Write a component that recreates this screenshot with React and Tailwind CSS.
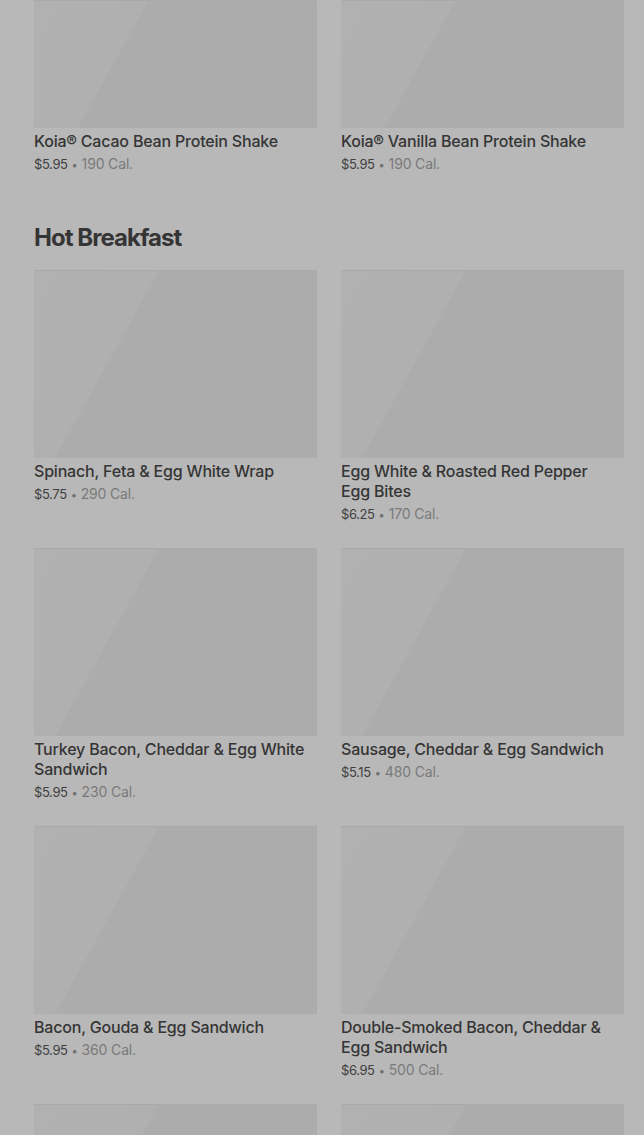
const TOP = [
  { name: 'Koia® Cacao Bean Protein Shake', price: '$5.95', cal: '190 Cal.' },
  { name: 'Koia® Vanilla Bean Protein Shake', price: '$5.95', cal: '190 Cal.' },
]

const HOT_BREAKFAST = [
  { name: 'Spinach, Feta & Egg White Wrap', price: '$5.75', cal: '290 Cal.' },
  { name: 'Egg White & Roasted Red Pepper Egg Bites', price: '$6.25', cal: '170 Cal.' },
  { name: 'Turkey Bacon, Cheddar & Egg White Sandwich', price: '$5.95', cal: '230 Cal.' },
  { name: 'Sausage, Cheddar & Egg Sandwich', price: '$5.15', cal: '480 Cal.' },
  { name: 'Bacon, Gouda & Egg Sandwich', price: '$5.95', cal: '360 Cal.' },
  { name: 'Double-Smoked Bacon, Cheddar & Egg Sandwich', price: '$6.95', cal: '500 Cal.' },
  { name: '', price: '', cal: '' },
  { name: '', price: '', cal: '' },
]

function Placeholder({ short }) {
  return (
    <div
      className={`w-full bg-[linear-gradient(119deg,#b1b1b1_0%,#b0b0b0_32%,#acacac_32.5%,#acacac_100%)] border-t border-[#a9a9a9] ${
        short ? 'h-[128px]' : 'h-[188px]'
      }`}
    />
  )
}

function ItemCard({ item, short }) {
  return (
    <div className="flex flex-col">
      <Placeholder short={short} />
      {item.name && (
        <>
          <div className="mt-[3px] pr-2 text-[16px] leading-5 font-medium text-[#353535] tracking-[-0.012em]">
            {item.name}
          </div>
          <div className="mt-[2px] h-5 leading-5 tracking-[-0.01em] overflow-hidden">
            <span className="text-[13px] text-[#3f3f3f] tracking-[-0.03em]">{item.price}</span>
            <span className="text-[#6f6f6f] text-[11px] mx-[4px]">•</span>
            <span className="text-[14px] text-[#7a7a7a]">{item.cal}</span>
          </div>
        </>
      )}
    </div>
  )
}

export default function App() {
  return (
    <div
      className="min-h-screen h-[1135px] overflow-hidden bg-[#b8b8b8] pl-[34px] pr-[20px]"
      style={{ fontFamily: 'Inter, "Noto Sans", sans-serif' }}
    >
      <div className="grid grid-cols-2 gap-x-6">
        {TOP.map((item) => (
          <ItemCard key={item.name} item={item} short />
        ))}
      </div>

      <h2 className="mt-[49px] mb-4 text-[24px] leading-8 font-bold tracking-[-0.04em] text-[#353535]">
        Hot Breakfast
      </h2>

      <div className="grid grid-cols-2 gap-x-6 gap-y-[25px]">
        {HOT_BREAKFAST.map((item, i) => (
          <ItemCard key={i} item={item} />
        ))}
      </div>
    </div>
  )
}
